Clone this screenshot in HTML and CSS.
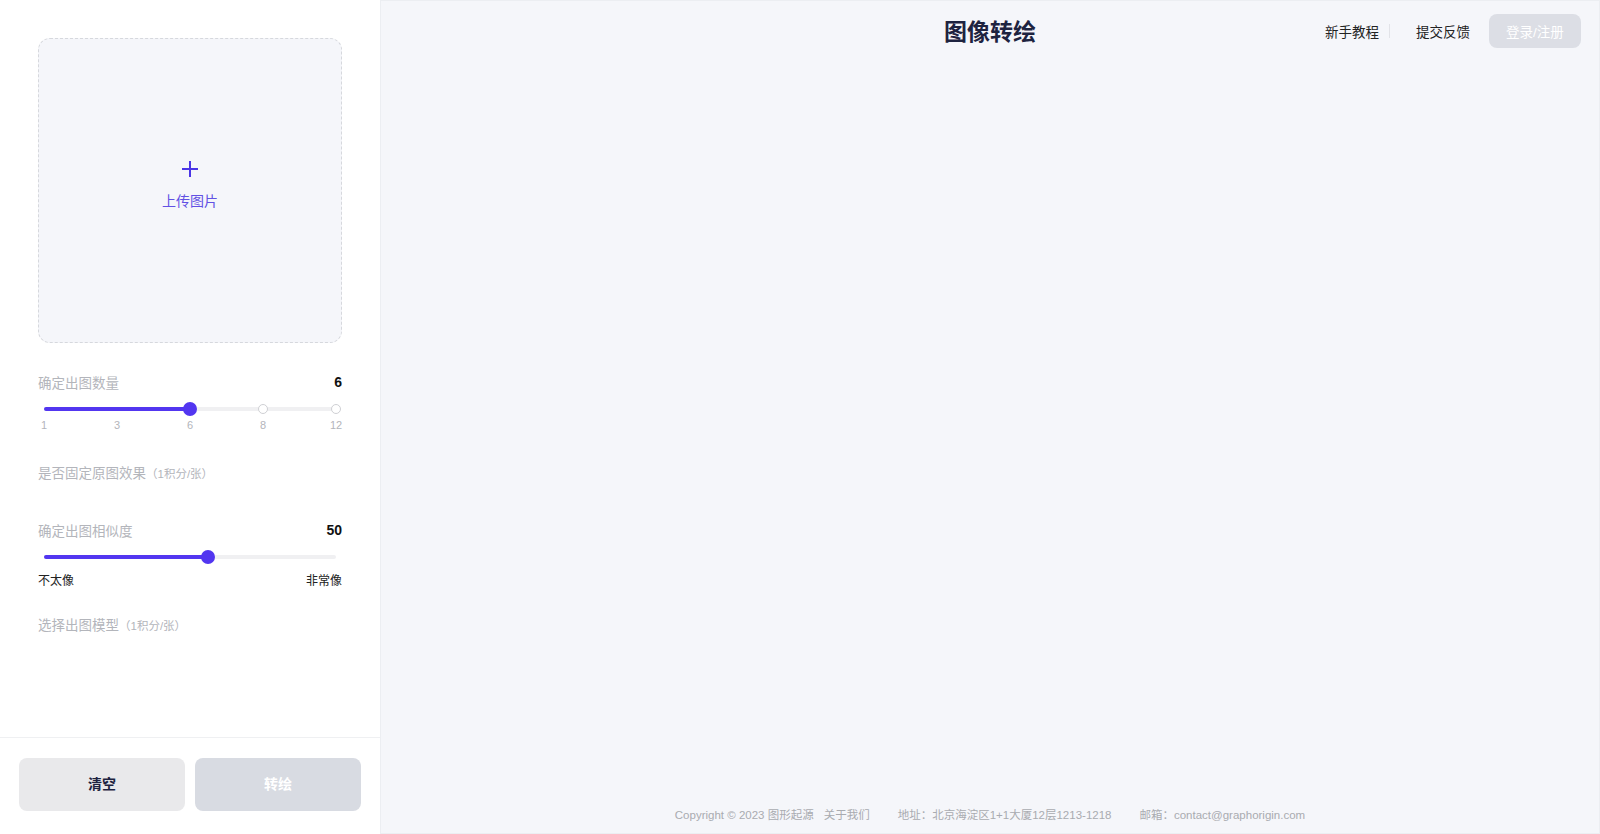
FILE: index.html
```html
<!DOCTYPE html>
<html lang="zh">
<head>
<meta charset="utf-8">
<title>图像转绘</title>
<link rel="stylesheet" href="styles.css">
</head>
<body>
<div class="app">
  <aside class="sidebar">
    <div class="side-body">
      <div class="upload">
        <svg class="plus" width="18" height="18" viewBox="0 0 18 18"><path d="M9 1v16M1 9h16" stroke="#4a35e6" stroke-width="2" fill="none"/></svg>
        <div class="upload-text">上传图片</div>
      </div>

      <div class="row row-first">
        <span class="label">确定出图数量</span>
        <span class="value">6</span>
      </div>
      <div class="slider slider-count">
        <div class="track"></div>
        <div class="fill" style="width:50%"></div>
        <span class="dot" style="left:75%"></span>
        <span class="dot" style="left:100%"></span>
        <span class="thumb" style="left:50%"></span>
      </div>
      <div class="ticks">
        <span>1</span><span>3</span><span>6</span><span>8</span><span>12</span>
      </div>

      <div class="row row-fix">
        <span class="label">是否固定原图效果<small>（1积分/张）</small></span>
      </div>

      <div class="row row-sim">
        <span class="label">确定出图相似度</span>
        <span class="value">50</span>
      </div>
      <div class="slider slider-sim">
        <div class="track"></div>
        <div class="fill" style="width:56%"></div>
        <span class="thumb" style="left:56%"></span>
      </div>
      <div class="ends">
        <span>不太像</span><span>非常像</span>
      </div>

      <div class="row row-model">
        <span class="label">选择出图模型<small>（1积分/张）</small></span>
      </div>
    </div>
    <div class="side-foot">
      <button class="btn btn-clear">清空</button>
      <button class="btn btn-go">转绘</button>
    </div>
  </aside>

  <main class="main">
    <header class="header">
      <h1 class="title">图像转绘</h1>
      <nav class="nav">
        <a class="nav-link">新手教程</a>
        <span class="nav-sep"></span>
        <a class="nav-link">提交反馈</a>
        <button class="login">登录/注册</button>
      </nav>
    </header>
    <div class="content"></div>
    <footer class="footer">
      <span>Copyright © 2023 图形起源</span>
      <span class="about">关于我们</span>
      <span class="addr">地址：北京海淀区1+1大厦12层1213-1218</span>
      <span class="mail">邮箱：contact@graphorigin.com</span>
    </footer>
  </main>
</div>
</body>
</html>
```

FILE: styles.css
```css
* { box-sizing: border-box; }
html, body { margin: 0; padding: 0; }
body {
  font-family: "Liberation Sans", "Noto Sans CJK SC", sans-serif;
  color: #1e2340;
  background: #fff;
}
.app {
  display: flex;
  width: 1600px;
  height: 834px;
}
.sidebar {
  width: 380px;
  flex: none;
  display: flex;
  flex-direction: column;
  background: #fff;
}
.side-body {
  flex: 1;
  padding: 38px 38px 0;
}
.upload {
  height: 305px;
  background: #f5f6fa;
  border: 1px dashed #d6d8dd;
  border-radius: 12px;
  display: flex;
  flex-direction: column;
  align-items: center;
  justify-content: center;
  padding-bottom: 10px;
}
.upload-text {
  margin-top: 13px;
  font-size: 14px;
  line-height: 20px;
  color: #6251e4;
}
.row {
  display: flex;
  justify-content: space-between;
  align-items: center;
  height: 20px;
}
.row-first { margin-top: 29px; }
.label { font-size: 13.5px; color: #b3b5bb; }
.label small { font-size: 11.5px; color: #b3b5bb; }
.value { font-size: 14px; font-weight: 700; color: #111; }
.slider {
  position: relative;
  height: 16px;
  margin: 8px 6px 0;
}
.slider-count { margin-top: 9px; }
.slider-sim { margin-top: 9px; }
.track {
  position: absolute;
  left: 0; right: 0; top: 6px;
  height: 4px;
  border-radius: 2px;
  background: #f0f0f2;
}
.fill {
  position: absolute;
  left: 0; top: 6px;
  height: 4px;
  border-radius: 2px;
  background: #5236f0;
}
.dot {
  position: absolute;
  top: 3px;
  width: 10px; height: 10px;
  margin-left: -5px;
  border-radius: 50%;
  background: #fff;
  border: 1.5px solid #cfd0d4;
}
.thumb {
  position: absolute;
  top: 1px;
  width: 14px; height: 14px;
  margin-left: -7px;
  border-radius: 50%;
  background: #5236f0;
}
.ticks {
  display: flex;
  justify-content: space-between;
  margin: 1px 0 0;
  font-size: 11px;
  line-height: 14px;
  color: #b3b5bb;
}
.ticks span { width: 12px; text-align: center; }
.row-fix { margin-top: 30px; }
.row-sim { margin-top: 38px; }
.ends {
  display: flex;
  justify-content: space-between;
  margin-top: 8px;
  font-size: 12px;
  line-height: 16px;
  color: #222;
}
.row-model { margin-top: 25px; }
.side-foot {
  border-top: 1px solid #eff0f2;
  padding: 20px 19px 23px;
  display: flex;
  gap: 10px;
}
.btn {
  flex: 1;
  height: 53px;
  border: none;
  border-radius: 8px;
  font-family: inherit;
  font-size: 14px;
  font-weight: 700;
  padding: 0 0 3px;
}
.btn-clear { background: #e9e9eb; color: #1e2340; }
.btn-go { background: #d8dbe2; color: #fff; }

.main {
  flex: 1;
  display: flex;
  flex-direction: column;
  background: #f5f6fa;
  border: 1px solid #eceef2;
}
.header {
  position: relative;
  height: 62px;
  display: flex;
  align-items: center;
  justify-content: center;
  padding-bottom: 5px;
}
.title {
  margin: 0;
  font-size: 23px;
  font-weight: 700;
  color: #1e2340;
}
.nav {
  position: absolute;
  right: 18px;
  top: 13px;
  display: flex;
  align-items: center;
  height: 34px;
}
.nav-link {
  font-size: 13.5px;
  color: #222;
}
.nav-sep {
  width: 1px;
  height: 14px;
  background: #e2e3e8;
  margin: 0 26px 0 10px;
}
.login {
  margin-left: 19px;
  width: 92px;
  height: 34px;
  border: none;
  border-radius: 8px;
  background: #dcdee5;
  color: #fff;
  font-family: inherit;
  font-size: 13.5px;
}
.content { flex: 1; }
.footer {
  height: 40px;
  display: flex;
  justify-content: center;
  align-items: center;
  padding-top: 1px;
  font-size: 11.5px;
  color: #a9abb0;
}
.about { margin-left: 10px; }
.addr { margin-left: 28px; }
.mail { margin-left: 28px; }
```
